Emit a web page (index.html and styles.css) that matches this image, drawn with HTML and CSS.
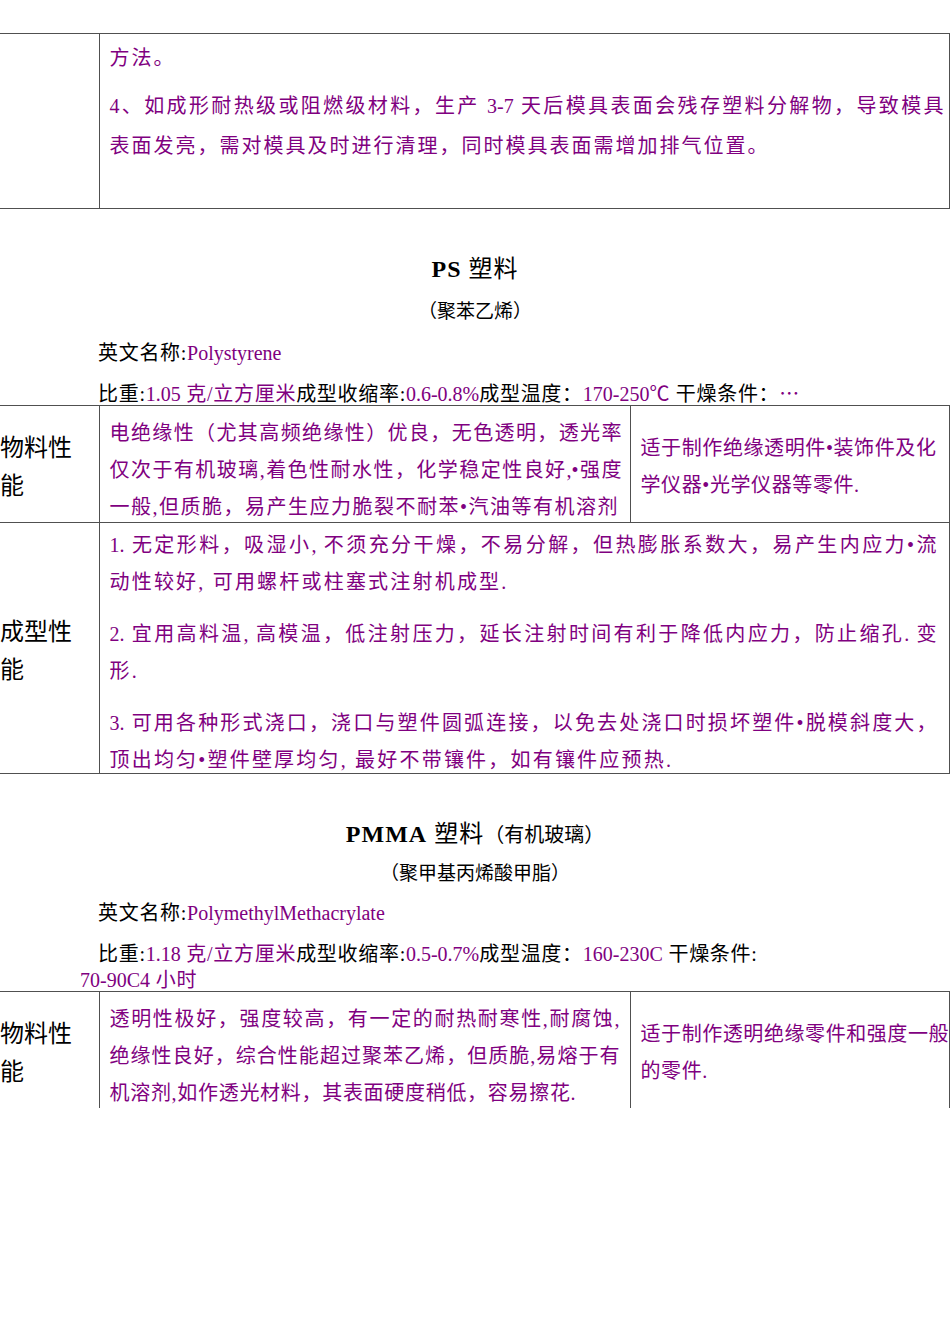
FILE: index.html
```html
<!DOCTYPE html>
<html lang="zh-CN">
<head>
<meta charset="utf-8">
<title>塑料性能</title>
<link rel="stylesheet" href="styles.css">
</head>
<body>
<table class="grid t1">
  <colgroup><col class="c1"><col class="c-rest"></colgroup>
  <tr>
    <td class="label"></td>
    <td class="txt cont">
      <span class="ln">方法。</span>
      <span class="para">
        <span class="ln j">4、如成形耐热级或阻燃级材料，生产 3-7 天后模具表面会残存塑料分解物，导致模具</span>
        <span class="ln">表面发亮，需对模具及时进行清理，同时模具表面需增加排气位置。</span>
      </span>
    </td>
  </tr>
</table>

<section class="sec sec-ps">
  <h2 class="title"><b>PS</b> 塑料</h2>
  <p class="sub">（聚苯乙烯）</p>
  <p class="info">英文名称:<span class="v en">Polystyrene</span></p>
  <p class="info spec">比重:<span class="v"><span class="en">1.05</span> 克/立方厘米</span>成型收缩率:<span class="v en">0.6-0.8%</span>成型温度：<span class="v"><span class="en">170-250</span>℃</span> 干燥条件：<span class="v cjk">…</span></p>
</section>

<table class="grid t2">
  <colgroup><col class="c1"><col class="c2"><col class="c3"></colgroup>
  <tr>
    <td class="label">物料性<br>能</td>
    <td class="txt prop">
      <span class="ln j">电绝缘性（尤其高频绝缘性）优良，无色透明，透光率</span>
      <span class="ln j">仅次于有机玻璃,着色性耐水性，化学稳定性良好,•强度</span>
      <span class="ln last">一般,但质脆，易产生应力脆裂不耐苯•汽油等有机溶剂</span>
    </td>
    <td class="txt use">
      <span class="ln">适于制作绝缘透明件•装饰件及化</span>
      <span class="ln">学仪器•光学仪器等零件.</span>
    </td>
  </tr>
  <tr>
    <td class="label">成型性<br>能</td>
    <td class="txt mold" colspan="2">
      <span class="para">
        <span class="ln j">1. 无定形料，吸湿小, 不须充分干燥，不易分解，但热膨胀系数大，易产生内应力•流</span>
        <span class="ln">动性较好, 可用螺杆或柱塞式注射机成型.</span>
      </span>
      <span class="para">
        <span class="ln j">2. 宜用高料温, 高模温，低注射压力，延长注射时间有利于降低内应力，防止缩孔. 变</span>
        <span class="ln">形.</span>
      </span>
      <span class="para">
        <span class="ln j">3. 可用各种形式浇口，浇口与塑件圆弧连接，以免去处浇口时损坏塑件•脱模斜度大，</span>
        <span class="ln last">顶出均匀•塑件壁厚均匀, 最好不带镶件，如有镶件应预热.</span>
      </span>
    </td>
  </tr>
</table>

<section class="sec sec-pmma">
  <h2 class="title"><b>PMMA</b> 塑料<span class="paren">（有机玻璃）</span></h2>
  <p class="sub">（聚甲基丙烯酸甲脂）</p>
  <p class="info">英文名称:<span class="v en">PolymethylMethacrylate</span></p>
  <p class="info spec">比重:<span class="v"><span class="en">1.18</span> 克/立方厘米</span>成型收缩率:<span class="v en">0.5-0.7%</span>成型温度：<span class="v en">160-230C</span> 干燥条件:<br><span class="v"><span class="en">70-90C4</span> 小时</span></p>
</section>

<table class="grid t3">
  <colgroup><col class="c1"><col class="c2"><col class="c3"></colgroup>
  <tr>
    <td class="label">物料性<br>能</td>
    <td class="txt prop">
      <span class="ln j">透明性极好，强度较高，有一定的耐热耐寒性,耐腐蚀,</span>
      <span class="ln j">绝缘性良好，综合性能超过聚苯乙烯，但质脆,易熔于有</span>
      <span class="ln last">机溶剂,如作透光材料，其表面硬度稍低，容易擦花.</span>
    </td>
    <td class="txt use">
      <span class="ln j">适于制作透明绝缘零件和强度一般</span>
      <span class="ln">的零件.</span>
    </td>
  </tr>
</table>
</body>
</html>
```

FILE: styles.css
```css
html, body {
  margin: 0;
  padding: 0;
  background: #ffffff;
}

body {
  width: 950px;
  padding-top: 33px;
  font-family: "Liberation Serif", "Noto Sans CJK SC", serif;
  font-size: 20px;
  color: #000000;
}

/* ---------- tables ---------- */
.grid {
  border-collapse: collapse;
  table-layout: fixed;
  width: 949px;
  margin: 0;
}

.grid td {
  border: 1px solid #505050;
  padding: 0;
  vertical-align: top;
}

.grid td.label {
  border-left: none;
}

.c1 { width: 99px; }
.c-rest { width: 850px; }
.c2 { width: 531px; }
.c3 { width: 319px; }

.label {
  font-size: 24px;
  line-height: 38px;
  vertical-align: middle !important;
}

.txt {
  color: #800080;
  line-height: 37px;
}

.ln {
  display: block;
  white-space: nowrap;
}

.ln.j {
  white-space: normal;
  letter-spacing: 0;
  text-align: justify;
  text-align-last: justify;
}

.ln.last {
  margin-bottom: -4px;
}

.para {
  display: block;
}

/* table 1 */
.cont {
  line-height: 40px;
  letter-spacing: 2px;
  padding: 4px 5px 42px 10px !important;
}

.cont .para {
  margin-top: 8px;
}

/* material property cell */
.prop {
  padding: 9px 8px 0 10px !important;
  letter-spacing: 1.5px;
}

.t3 .prop {
  padding-right: 10px !important;
  letter-spacing: 0.7px;
}

/* application cell */
.use {
  vertical-align: middle !important;
  padding: 0 5px 0 10px !important;
  letter-spacing: 0.6px;
}

.t2 .use,
.t2 .label {
  padding-top: 6px !important;
}

.t3 .use {
  vertical-align: top !important;
  padding-top: 24px !important;
  padding-right: 0 !important;
}

.t3 .label {
  vertical-align: top !important;
  padding-top: 23px !important;
}

/* molding cell */
.mold {
  padding: 4px 12px 0 10px !important;
  letter-spacing: 2.2px;
}

.mold .para + .para {
  margin-top: 15px;
}

.mold .ln.last {
  margin-bottom: -6px;
}

.t3 tr td {
  border-bottom: none;
}

/* ---------- section headings ---------- */
.title {
  margin: 40px 0 0;
  font-size: 24px;
  font-weight: normal;
  line-height: 40px;
  letter-spacing: 1px;
  text-align: center;
}

.title b {
  font-weight: bold;
}

.title .paren {
  font-size: 20px;
  letter-spacing: 0;
}

.sub {
  margin: 5px 0 0;
  font-size: 19px;
  line-height: 36px;
  text-align: center;
}

.info {
  margin: 3px 0 0;
  padding-left: 80px;
  text-indent: 18px;
  line-height: 40px;
  letter-spacing: 0.7px;
}

.info.spec {
  margin-top: 9px;
  line-height: 22px;
}

.sec-pmma .title {
  margin-top: 40px;
}

.sec-pmma .sub {
  margin-top: 1px;
}

.sec-pmma .info {
  margin-top: 1px;
}

.sec-pmma .info.spec {
  margin-top: 8px;
  margin-bottom: -2px;
  line-height: 26px;
}

.v {
  color: #800080;
}

.en {
  letter-spacing: 0;
}

.cjk {
  font-family: "Noto Sans CJK SC", sans-serif;
}
```
